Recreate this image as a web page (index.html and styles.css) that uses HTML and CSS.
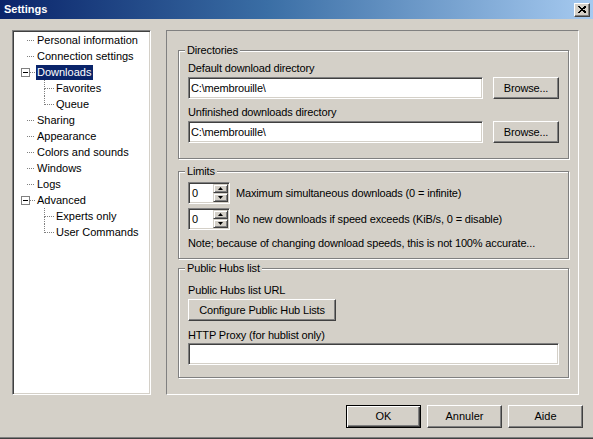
FILE: index.html
```html
<!DOCTYPE html>
<html lang="en">
<head>
<meta charset="utf-8">
<title>Settings</title>
<link rel="stylesheet" href="styles.css">
</head>
<body>
<div class="window">
  <div class="titlebar">
    <span class="title">Settings</span>
    <button class="close" aria-label="Close">
      <svg width="8" height="7" viewBox="0 0 8 7"><path d="M0.5 0.5 L7 6.5 M1.5 0.5 L8 6.5 M7 0.5 L0.5 6.5 M8 0.5 L1.5 6.5" stroke="#000" stroke-width="1" fill="none" shape-rendering="crispEdges"/></svg>
    </button>
  </div>

  <div class="main">
    <ul class="tree">
      <li class="node"><span class="joint"><span class="twig"></span></span><span class="label">Personal information</span></li>
      <li class="node"><span class="joint"><span class="twig"></span></span><span class="label">Connection settings</span></li>
      <li class="node"><span class="joint"><span class="box"><span class="minus"></span></span><span class="twig short"></span></span><span class="label selected">Downloads</span></li>
      <li class="node child"><span class="elbow"><span class="elbow-top"></span><span class="elbow-rest"></span></span><span class="label">Favorites</span></li>
      <li class="node child"><span class="elbow"><span class="elbow-top"></span></span><span class="label">Queue</span></li>
      <li class="node"><span class="joint"><span class="twig"></span></span><span class="label">Sharing</span></li>
      <li class="node"><span class="joint"><span class="twig"></span></span><span class="label">Appearance</span></li>
      <li class="node"><span class="joint"><span class="twig"></span></span><span class="label">Colors and sounds</span></li>
      <li class="node"><span class="joint"><span class="twig"></span></span><span class="label">Windows</span></li>
      <li class="node"><span class="joint"><span class="twig"></span></span><span class="label">Logs</span></li>
      <li class="node"><span class="joint"><span class="box"><span class="minus"></span></span><span class="twig short"></span></span><span class="label">Advanced</span></li>
      <li class="node child"><span class="elbow"><span class="elbow-top"></span><span class="elbow-rest"></span></span><span class="label">Experts only</span></li>
      <li class="node child"><span class="elbow"><span class="elbow-top"></span></span><span class="label">User Commands</span></li>
    </ul>

    <div class="page">
      <fieldset class="group dirs">
        <legend>Directories</legend>
        <div class="caption">Default download directory</div>
        <div class="path-row">
          <input class="field" type="text" value="C:\membrouille\">
          <button class="btn browse">Browse...</button>
        </div>
        <div class="caption second">Unfinished downloads directory</div>
        <div class="path-row">
          <input class="field" type="text" value="C:\membrouille\">
          <button class="btn browse">Browse...</button>
        </div>
      </fieldset>

      <fieldset class="group limits">
        <legend>Limits</legend>
        <div class="spin-row">
          <div class="spin">
            <span class="spin-value">0</span>
            <span class="spin-btns">
              <span class="spin-btn"><svg width="5" height="3" viewBox="0 0 5 3"><path d="M2.5 0 L5 3 L0 3 Z" fill="#000"/></svg></span>
              <span class="spin-btn"><svg width="5" height="3" viewBox="0 0 5 3"><path d="M0 0 L5 0 L2.5 3 Z" fill="#000"/></svg></span>
            </span>
          </div>
          <span>Maximum simultaneous downloads (0 = infinite)</span>
        </div>
        <div class="spin-row">
          <div class="spin">
            <span class="spin-value">0</span>
            <span class="spin-btns">
              <span class="spin-btn"><svg width="5" height="3" viewBox="0 0 5 3"><path d="M2.5 0 L5 3 L0 3 Z" fill="#000"/></svg></span>
              <span class="spin-btn"><svg width="5" height="3" viewBox="0 0 5 3"><path d="M0 0 L5 0 L2.5 3 Z" fill="#000"/></svg></span>
            </span>
          </div>
          <span>No new downloads if speed exceeds (KiB/s, 0 = disable)</span>
        </div>
        <div class="note">Note; because of changing download speeds, this is not 100% accurate...</div>
      </fieldset>

      <fieldset class="group hubs">
        <legend>Public Hubs list</legend>
        <div class="caption">Public Hubs list URL</div>
        <button class="btn configure">Configure Public Hub Lists</button>
        <div class="caption proxy">HTTP Proxy (for hublist only)</div>
        <input class="field wide" type="text" value="">
      </fieldset>
    </div>
  </div>

  <div class="footer">
    <button class="btn action default">OK</button>
    <button class="btn action">Annuler</button>
    <button class="btn action">Aide</button>
  </div>
</div>
</body>
</html>
```

FILE: styles.css
```css
* { box-sizing: border-box; }

body {
  margin: 0;
  background: #d4d0c8;
}

.window {
  width: 593px;
  height: 439px;
  display: flex;
  flex-direction: column;
  background: #d4d0c8;
  font: 11px/13px "Liberation Sans", Arial, sans-serif;
  color: #000;
  border-bottom: 1px solid #404040;
  box-shadow: inset 0 -1px #808080;
}

/* caption bar */
.titlebar {
  flex: none;
  height: 19px;
  display: flex;
  align-items: center;
  padding: 0 3px 0 4px;
  background: linear-gradient(to right, #0a246a 0%, #3a6ea5 45%, #a6caf0 100%);
}

.title {
  flex: 1;
  color: #fff;
  font-weight: bold;
  font-size: 11px;
}

.close {
  width: 16px;
  height: 14px;
  padding: 0;
  display: flex;
  align-items: center;
  justify-content: center;
  background: #d4d0c8;
  border: 1px solid;
  border-color: #fff #404040 #404040 #fff;
  box-shadow: inset -1px -1px #808080, inset 1px 1px #d4d0c8;
}

/* body: tree + page */
.main {
  flex: none;
  height: 376px;
  display: flex;
  gap: 15px;
  padding: 11px 14px 0 12px;
}

.tree {
  width: 139px;
  margin: 0;
  padding: 0;
  list-style: none;
  background: #fff;
  border: 1px solid;
  border-color: #808080 #fff #fff #808080;
  box-shadow: inset 1px 1px #404040, inset -1px -1px #d4d0c8;
}

.node {
  height: 16px;
  display: flex;
  align-items: center;
  padding-left: 7px;
  white-space: nowrap;
}

.node:first-child { margin-top: 1px; }

.joint {
  width: 15px;
  height: 16px;
  display: flex;
  align-items: center;
}

.twig {
  width: 7px;
  margin-left: 7px;
  border-top: 1px dotted #808080;
}

.twig.short {
  width: 6px;
  margin-left: 0;
}

.box {
  width: 9px;
  height: 9px;
  margin-left: 1px;
  border: 1px solid #808080;
  background: #fff;
  display: flex;
  align-items: center;
  justify-content: center;
}

.box + .twig.short { width: 5px; }

.minus {
  width: 5px;
  height: 1px;
  background: #000;
}

.node.child { padding-left: 31px; }

.elbow {
  width: 10px;
  height: 16px;
  display: flex;
  flex-direction: column;
}

.elbow-top {
  height: 9px;
  border-left: 1px dotted #808080;
  border-bottom: 1px dotted #808080;
}

.elbow-rest {
  flex: 1;
  border-left: 1px dotted #808080;
}

.label {
  padding: 1px 2px 1px 1px;
  margin-left: 1px;
  line-height: 13px;
}

.label.selected {
  background: #0a246a;
  color: #fff;
}

/* right-hand page */
.page {
  flex: 1;
  display: flex;
  flex-direction: column;
  padding: 13px 9px 0 11px;
  border: 1px solid;
  border-color: #808080 #fff #fff #808080;
  letter-spacing: -0.15px;
}

.group {
  margin: 0;
  min-width: 0;
  padding: 0 9px;
  border: 1px solid #808080;
  box-shadow: inset 1px 1px #fff, 1px 1px #fff;
}

.group legend {
  padding: 0 2px;
  margin-left: -3px;
  line-height: 13px;
  background: #d4d0c8;
}

.dirs { padding-top: 5px; padding-bottom: 15px; }

.caption { line-height: 13px; }
.caption.second { margin-top: 7px; }

.path-row {
  display: flex;
  gap: 10px;
  margin-top: 2px;
}

.field {
  height: 22px;
  margin: 0;
  padding: 0 2px;
  font: inherit;
  letter-spacing: inherit;
  color: #000;
  background: #fff;
  border: 1px solid;
  border-color: #808080 #fff #fff #808080;
  box-shadow: inset 1px 1px #404040, inset -1px -1px #d4d0c8;
  outline: none;
}

.path-row .field { flex: 1; min-width: 0; }

.btn {
  height: 22px;
  margin: 0;
  padding: 0;
  font: inherit;
  letter-spacing: inherit;
  color: #000;
  background: #d4d0c8;
  border: 1px solid;
  border-color: #fff #404040 #404040 #fff;
  box-shadow: inset -1px -1px #808080, inset 1px 1px #d4d0c8;
}

.browse { width: 66px; flex: none; }

.limits {
  margin-top: 6px;
  padding-top: 4px;
  padding-bottom: 8px;
}

.spin-row {
  height: 22px;
  display: flex;
  align-items: center;
  gap: 6px;
}

.spin-row + .spin-row { margin-top: 4px; }

.spin {
  width: 42px;
  height: 22px;
  display: flex;
  background: #fff;
  border: 1px solid;
  border-color: #808080 #fff #fff #808080;
  box-shadow: inset 1px 1px #404040, inset -1px -1px #d4d0c8;
  padding: 1px;
}

.spin-value {
  flex: 1;
  padding-left: 2px;
  line-height: 18px;
}

.spin-btns {
  width: 15px;
  display: flex;
  flex-direction: column;
}

.spin-btn {
  flex: 1;
  display: flex;
  align-items: center;
  justify-content: center;
  background: #d4d0c8;
  border: 1px solid;
  border-color: #d4d0c8 #404040 #404040 #d4d0c8;
  box-shadow: inset 1px 1px #fff, inset -1px -1px #808080;
}

.note { margin-top: 7px; }

.hubs {
  margin-top: 3px;
  padding-top: 9px;
  padding-bottom: 12px;
}

.configure {
  display: block;
  width: 148px;
  margin-top: 2px;
}

.caption.proxy { margin-top: 8px; }

.field.wide {
  display: block;
  width: 100%;
  margin-top: 1px;
}

/* dialog buttons */
.footer {
  display: flex;
  justify-content: flex-end;
  gap: 6px;
  padding: 10px 10px 0 0;
}

.action {
  width: 75px;
  height: 23px;
}

.action.default {
  border: 1px solid #000;
  box-shadow: inset 1px 1px #fff, inset -1px -1px #404040, inset -2px -2px #808080;
}
```
